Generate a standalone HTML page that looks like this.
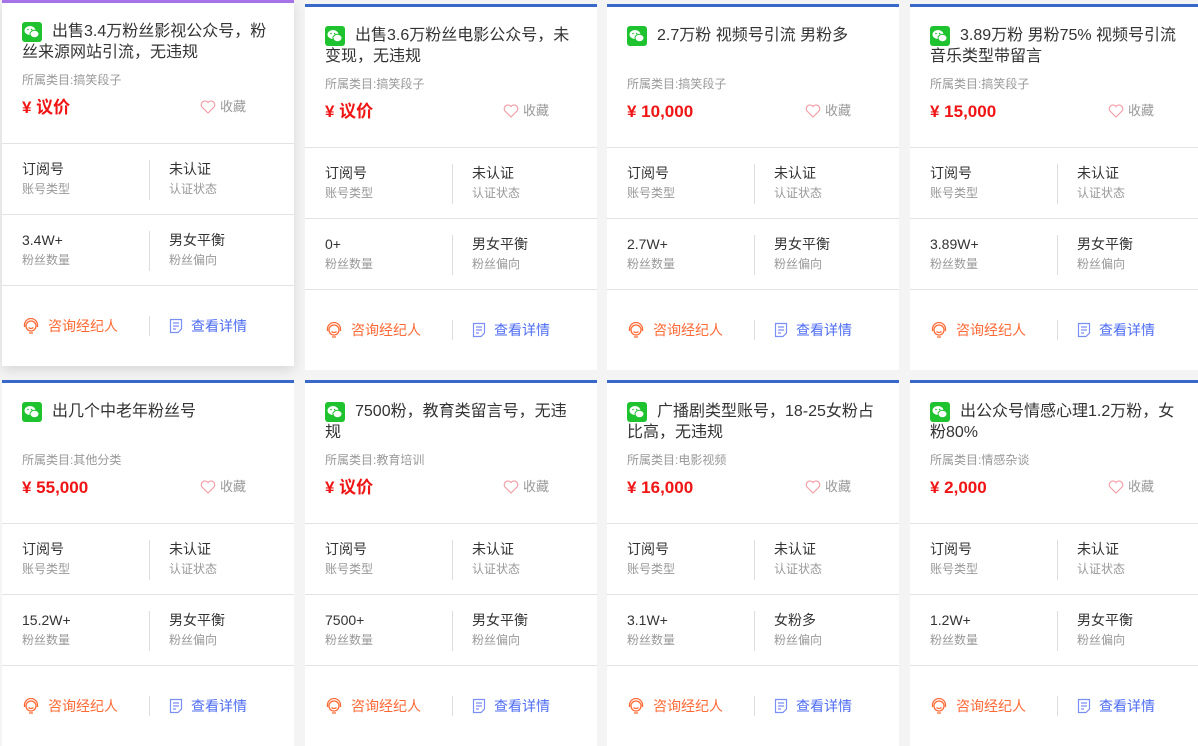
<!DOCTYPE html>
<html><head><meta charset="utf-8"><style>
*{margin:0;padding:0;box-sizing:border-box}
body{width:1198px;height:732px;overflow:hidden;background:#f4f4f4;font-family:"Liberation Sans","Noto Sans CJK SC",sans-serif;position:relative}
.c{position:absolute;width:292px;height:366px;background:#fff;border-top:3px solid #3a68c9}
.c.h{border-top-color:#a574e6;box-shadow:0 4px 12px rgba(0,0,0,.12)}
.c>*{position:absolute}
.ic{left:20px;top:19px;width:20px;height:20px;background:#1fc22f;border-radius:3px}
.t{left:20px;top:18px;width:255px;font-size:16px;line-height:21px;color:#333;text-indent:30px}
.cat{left:20px;top:69px;font-size:12px;color:#999;line-height:16px}
.p{left:20px;top:95px;font-size:17px;font-weight:bold;color:#f01414;line-height:20px}
.fav{left:198px;top:95px;font-size:13px;color:#999;line-height:18px}
.fav svg{vertical-align:-3px;margin-right:4px}
.d{left:0;width:100%;height:1px;background:#e3e3e3}
.v{left:147px;width:1px;height:40px;background:#ddd}
.l{font-size:14px;color:#333;line-height:18px}
.s{font-size:12px;color:#999;line-height:16px}
.fo{top:314px;font-size:14px;line-height:18px}
.fo svg{vertical-align:-3px;margin-right:8px}
</style></head><body>
<div id="root"></div>
<script>
const data=[
["出售3.4万粉丝影视公众号，粉丝来源网站引流，无违规","搞笑段子","¥ 议价","3.4W+","男女平衡"],
["出售3.6万粉丝电影公众号，未变现，无违规","搞笑段子","¥ 议价","0+","男女平衡"],
["2.7万粉 视频号引流 男粉多","搞笑段子","¥ 10,000","2.7W+","男女平衡"],
["3.89万粉 男粉75% 视频号引流音乐类型带留言","搞笑段子","¥ 15,000","3.89W+","男女平衡"],
["出几个中老年粉丝号","其他分类","¥ 55,000","15.2W+","男女平衡"],
["7500粉，教育类留言号，无违规","教育培训","¥ 议价","7500+","男女平衡"],
["广播剧类型账号，18-25女粉占比高，无违规","电影视频","¥ 16,000","3.1W+","女粉多"],
["出公众号情感心理1.2万粉，女粉80%","情感杂谈","¥ 2,000","1.2W+","男女平衡"]];
const xs=[2,305,607,910];
let h='';
data.forEach((d,i)=>{
const col=i%4,row=Math.floor(i/4);
let top=row?380:4, cls='c';
if(i==0){top=0;cls+=' h';}
h+=`<div class="${cls}" style="left:${xs[col]}px;top:${top}px">
<div class="ic"><svg width="20" height="20" viewBox="0 0 20 20"><ellipse cx="8" cy="8.5" rx="5.5" ry="4.5" fill="#fff"/><ellipse cx="12.5" cy="12" rx="4.5" ry="3.7" fill="#fff" stroke="#1fc22f" stroke-width="1"/><circle cx="6" cy="7.5" r=".8" fill="#1fc22f"/><circle cx="9.6" cy="7.5" r=".8" fill="#1fc22f"/></svg></div>
<div class="t">${d[0]}</div>
<div class="cat">所属类目:${d[1]}</div>
<div class="p">${d[2]}</div>
<div class="fav"><svg width="16" height="14" viewBox="0 0 16 14"><path d="M8 13 L2 7 A3.3 3.3 0 0 1 8 2.5 A3.3 3.3 0 0 1 14 7 Z" fill="none" stroke="#f2a0a8" stroke-width="1.2"/></svg>收藏</div>
<div class="d" style="top:140px"></div>
<div class="v" style="top:157px"></div>
<div class="l" style="left:20px;top:157px">订阅号</div><div class="s" style="left:20px;top:178px">账号类型</div>
<div class="l" style="left:167px;top:157px">未认证</div><div class="s" style="left:167px;top:178px">认证状态</div>
<div class="d" style="top:211px"></div>
<div class="v" style="top:228px"></div>
<div class="l" style="left:20px;top:228px">${d[3]}</div><div class="s" style="left:20px;top:249px">粉丝数量</div>
<div class="l" style="left:167px;top:228px">${d[4]}</div><div class="s" style="left:167px;top:249px">粉丝偏向</div>
<div class="d" style="top:282px"></div>
<div class="v" style="top:313px;height:20px"></div>
<div class="fo" style="left:20px;color:#ff6a35"><svg width="18" height="16" viewBox="0 0 18 16"><circle cx="9" cy="8" r="5" fill="none" stroke="#ff6a35" stroke-width="1.3"/><path d="M2.5 9 V7 A6.5 6.5 0 0 1 15.5 7 V9 M6.5 9.5 Q9 11.5 11.5 9.5 M7 15 H11" fill="none" stroke="#ff6a35" stroke-width="1.3"/></svg>咨询经纪人</div>
<div class="fo" style="left:167px;color:#4e6df2"><svg width="14" height="16" viewBox="0 0 14 16"><path d="M1.5 1.5 H12.5 V11 L9 14.5 H1.5 Z M4 5 H10 M4 8 H10 M4 11 H7" fill="none" stroke="#7b8ef5" stroke-width="1.2"/></svg>查看详情</div>
</div>`;});
document.getElementById('root').innerHTML=h;
</script>
</body></html>
